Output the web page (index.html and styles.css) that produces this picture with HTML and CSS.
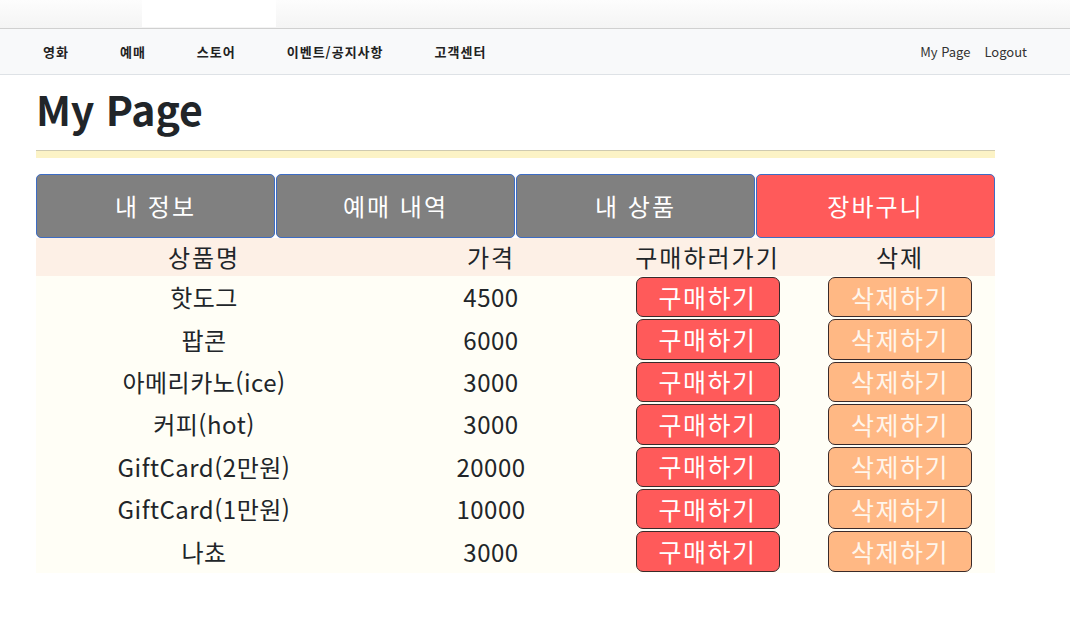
FILE: index.html
```html
<!DOCTYPE html>
<html lang="ko">
<head>
<meta charset="utf-8">
<title>My Page</title>
<link rel="stylesheet" href="styles.css">
</head>
<body>
<div class="topstrip"><div class="tab"></div></div>
<nav class="navbar">
  <ul class="menu">
    <li>영화</li>
    <li>예매</li>
    <li>스토어</li>
    <li>이벤트/공지사항</li>
    <li>고객센터</li>
  </ul>
  <ul class="user">
    <li>My Page</li>
    <li>Logout</li>
  </ul>
</nav>
<main class="container">
  <h1 class="title">My Page</h1>
  <div class="rule"></div>
  <div class="tabs">
    <button class="tabbtn">내 정보</button>
    <button class="tabbtn">예매 내역</button>
    <button class="tabbtn">내 상품</button>
    <button class="tabbtn active">장바구니</button>
  </div>
  <table class="cart">
    <colgroup>
      <col class="c1"><col class="c2"><col class="c3"><col class="c4">
    </colgroup>
    <thead>
      <tr><th>상품명</th><th>가격</th><th>구매하러가기</th><th>삭제</th></tr>
    </thead>
    <tbody>
      <tr><td>핫도그</td><td>4500</td><td><button class="buy">구매하기</button></td><td><button class="del">삭제하기</button></td></tr>
      <tr><td>팝콘</td><td>6000</td><td><button class="buy">구매하기</button></td><td><button class="del">삭제하기</button></td></tr>
      <tr><td>아메리카노(ice)</td><td>3000</td><td><button class="buy">구매하기</button></td><td><button class="del">삭제하기</button></td></tr>
      <tr><td>커피(hot)</td><td>3000</td><td><button class="buy">구매하기</button></td><td><button class="del">삭제하기</button></td></tr>
      <tr><td>GiftCard(2만원)</td><td>20000</td><td><button class="buy">구매하기</button></td><td><button class="del">삭제하기</button></td></tr>
      <tr><td>GiftCard(1만원)</td><td>10000</td><td><button class="buy">구매하기</button></td><td><button class="del">삭제하기</button></td></tr>
      <tr><td>나쵸</td><td>3000</td><td><button class="buy">구매하기</button></td><td><button class="del">삭제하기</button></td></tr>
    </tbody>
  </table>
</main>
</body>
</html>
```
FILE: styles.css
```css
* { box-sizing: border-box; }
html, body { margin: 0; padding: 0; background: #fff; }
body {
  font-family: "Noto Sans CJK KR", "Open Sans", sans-serif;
  color: #212529;
}
.topstrip {
  height: 29px;
  background: linear-gradient(#fdfdfd, #f4f4f4);
  border-bottom: 1px solid #d0d0d0;
  padding-left: 142px;
}
.topstrip .tab {
  width: 134px;
  height: 27px;
  background: #fff;
}
.navbar {
  height: 46px;
  background: #f8f9fa;
  border-bottom: 1px solid #dee2e6;
  display: flex;
  align-items: center;
  justify-content: space-between;
  padding: 0 43px;
  font-size: 13px;
  line-height: 16px;
}
.navbar ul { list-style: none; margin: 0; padding: 0; display: flex; }
.menu { gap: 51px; font-weight: 600; color: #222; letter-spacing: 1px; }
.user { gap: 14px; color: #333; }
.container {
  width: 959px;
  margin-left: 36px;
}
.title {
  margin: 8px 0 0 0;
  font-size: 41px;
  line-height: 50px;
  font-weight: 700;
  color: #212529;
  letter-spacing: -0.1px;
}
.rule {
  margin-top: 17px;
  height: 8px;
  background: #fcf3c6;
  border-top: 1px solid #cfcab0;
}
.tabs {
  margin-top: 16px;
  display: flex;
  gap: 1px;
}
.tabbtn {
  flex: 1;
  height: 64px;
  background: #808080;
  border: 1px solid #3d6cc4;
  border-radius: 5px;
  color: #fff;
  font-family: inherit;
  font-size: 24px;
  letter-spacing: 2px;
  padding: 0;
  line-height: 1;
}
.tabbtn.active { background: #ff5a5a; }
.cart {
  width: 959px;
  border-collapse: collapse;
  table-layout: fixed;
  font-size: 24px;
}
.c1 { width: 336px; }
.c2 { width: 238px; }
.c3 { width: 195px; }
.c4 { width: 190px; }
.cart thead tr { background: #fdf0e6; height: 38px; }
.cart th { font-weight: 400; padding: 0; line-height: 30px; color: #212529; letter-spacing: 2px; }
.cart tbody tr { background: #fffef6; height: 42.4px; }
.cart td { text-align: center; padding: 1px 0; line-height: 30px; color: #212529; letter-spacing: 0.5px; }
.buy, .del {
  width: 144px;
  height: 40.4px;
  border: 1px solid #3a2a2a;
  border-radius: 7px;
  font-family: inherit;
  font-size: 25px;
  letter-spacing: 1.5px;
  line-height: 1;
  padding: 0;
  vertical-align: middle;
}
.buy { background: #ff5a5a; color: #fff; }
.del { background: #ffb884; color: #fff6ec; }
```
